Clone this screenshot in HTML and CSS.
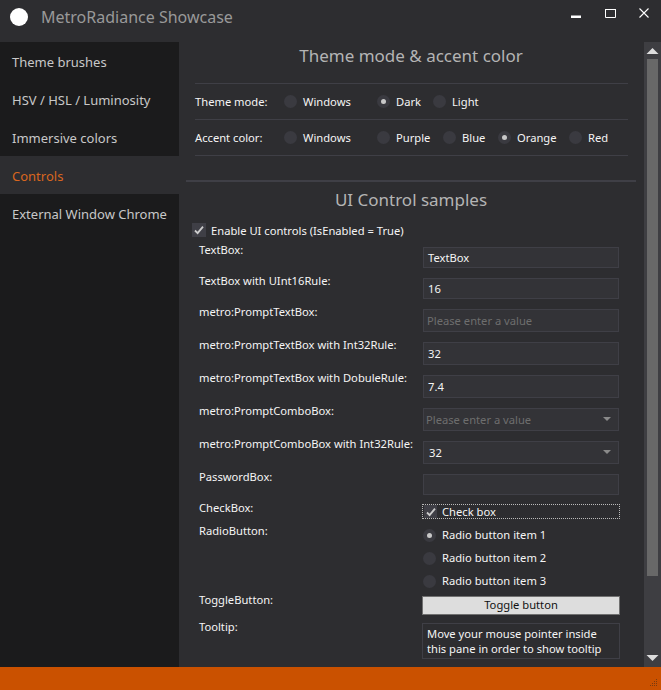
FILE: index.html
```html
<!DOCTYPE html>
<html lang="en">
<head>
<meta charset="utf-8">
<title>MetroRadiance Showcase</title>
<link rel="stylesheet" href="styles.css">
</head>
<body>
<div class="window">
  <header class="titlebar">
    <span class="app-icon"></span>
    <span class="app-title">MetroRadiance Showcase</span>
    <div class="caption">
      <svg class="cap" width="34" height="42" viewBox="0 0 34 42"><rect x="12" y="15.500" width="10" height="2.500" fill="#fff"/></svg>
      <svg class="cap" width="34" height="42" viewBox="0 0 34 42"><path d="M12.500 9.500h10v8h-10z" fill="none" stroke="#fff"/><path d="M12 9.500h11" fill="none" stroke="#fff"/></svg>
      <svg class="cap" width="34" height="42" viewBox="0 0 34 42"><path d="M12.500 8.500l9 9M21.500 8.500l-9 9" fill="none" stroke="#fff" stroke-width="1.100"/></svg>
    </div>
  </header>
  <div class="body">
    <nav class="sidebar">
      <div class="nav-item">Theme brushes</div>
      <div class="nav-item">HSV / HSL / Luminosity</div>
      <div class="nav-item">Immersive colors</div>
      <div class="nav-item active">Controls</div>
      <div class="nav-item">External Window Chrome</div>
    </nav>
    <main class="pane">
      <div class="content">
        <h2 class="heading h-first">Theme mode &amp; accent color</h2>
        <div class="settings">
          <div class="setting-row">
            <span class="setting-label">Theme mode:</span>
            <span class="opt w-win"><i class="radio"></i>Windows</span>
            <span class="opt w-dark"><i class="radio on"></i>Dark</span>
            <span class="opt"><i class="radio"></i>Light</span>
          </div>
          <div class="setting-row">
            <span class="setting-label">Accent color:</span>
            <span class="opt w-win"><i class="radio"></i>Windows</span>
            <span class="opt w-purple"><i class="radio"></i>Purple</span>
            <span class="opt w-blue"><i class="radio"></i>Blue</span>
            <span class="opt w-orange"><i class="radio on"></i>Orange</span>
            <span class="opt"><i class="radio"></i>Red</span>
          </div>
        </div>
        <hr class="divider">
        <h2 class="heading h-second">UI Control samples</h2>
        <div class="enable"><i class="check"><svg width="14" height="14" viewBox="0 0 14 14"><path d="M3 7.500l2.600 2.600L11 3.600" fill="none" stroke="#ccc" stroke-width="1.800"/></svg></i>Enable UI controls (IsEnabled = True)</div>
        <div class="samples">
          <div class="s-label">TextBox:</div>
          <div class="tb">TextBox</div>
          <div class="s-label">TextBox with UInt16Rule:</div>
          <div class="tb">16</div>
          <div class="s-label">metro:PromptTextBox:</div>
          <div class="tb tall prompt">Please enter a value</div>
          <div class="s-label">metro:PromptTextBox with Int32Rule:</div>
          <div class="tb tall">32</div>
          <div class="s-label">metro:PromptTextBox with DobuleRule:</div>
          <div class="tb tall">7.4</div>
          <div class="s-label">metro:PromptComboBox:</div>
          <div class="tb tall prompt combo">Please enter a value<i class="arrow"></i></div>
          <div class="s-label">metro:PromptComboBox with Int32Rule:</div>
          <div class="tb tall combo val">32<i class="arrow"></i></div>
          <div class="s-label">PasswordBox:</div>
          <div class="tb"></div>
          <div class="s-label l-check">CheckBox:</div>
          <div class="checkline"><i class="check"><svg width="14" height="14" viewBox="0 0 14 14"><path d="M3 7.500l2.600 2.600L11 3.600" fill="none" stroke="#ccc" stroke-width="1.800"/></svg></i>Check box</div>
          <div class="s-label l-radio">RadioButton:</div>
          <div class="radios">
            <span class="opt"><i class="radio on"></i>Radio button item 1</span>
            <span class="opt"><i class="radio"></i>Radio button item 2</span>
            <span class="opt"><i class="radio"></i>Radio button item 3</span>
          </div>
          <div class="s-label l-toggle">ToggleButton:</div>
          <div class="toggle">Toggle button</div>
          <div class="s-label l-tip">Tooltip:</div>
          <div class="tip">Move your mouse pointer inside<br>this pane in order to show tooltip</div>
        </div>
      </div>
      <div class="scrollbar">
        <svg class="sb-arrow" width="17" height="17" viewBox="0 0 17 17"><path d="M2.500 12L8.500 6l6 6z" fill="#ddd"/></svg>
        <div class="track"><div class="thumb"></div></div>
        <svg class="sb-arrow" width="17" height="17" viewBox="0 0 17 17"><path d="M2.500 5l6 6 6-6z" fill="#ddd"/></svg>
      </div>
    </main>
  </div>
  <footer class="status">
    <svg class="grip" width="10" height="10" viewBox="0 0 10 10" fill="#7a3a10"><rect x="7" y="1" width="1" height="1"/><rect x="5" y="3" width="1" height="1"/><rect x="7" y="3" width="1" height="1"/><rect x="3" y="5" width="1" height="1"/><rect x="5" y="5" width="1" height="1"/><rect x="7" y="5" width="1" height="1"/><rect x="1" y="7" width="1" height="1"/><rect x="3" y="7" width="1" height="1"/><rect x="5" y="7" width="1" height="1"/><rect x="7" y="7" width="1" height="1"/></svg>
  </footer>
</div>
</body>
</html>
```
FILE: styles.css
```css
* { box-sizing: border-box; }
html, body { margin: 0; height: 100%; }
body { font-family: "Noto Sans", sans-serif; font-size: 11.200px; color: #f5f5f5; background: #2d2d30; overflow: hidden; }
i { display: block; font-style: normal; }
.window { width: 661px; height: 690px; display: flex; flex-direction: column; }

.titlebar { height: 42px; flex: none; display: flex; align-items: center; padding: 0 0 8px 10px; background: #2d2d30; }
.app-icon { width: 18px; height: 18px; border-radius: 50%; background: #fff; margin-right: 13px; }
.app-title { font-size: 16px; color: #999; }
.caption { margin-left: auto; display: flex; align-self: flex-start; }
.cap { display: block; }

.body { flex: 1; display: flex; min-height: 0; }
.sidebar { width: 179px; flex: none; background: #1b1b1c; }
.nav-item { height: 38px; padding-left: 12px; line-height: 41px; font-size: 13px; color: #c8c8c8; }
.nav-item.active { background: #2d2d30; color: #d9661f; }

.pane { flex: 1; display: flex; min-width: 0; }
.content { flex: 1; min-width: 0; overflow: hidden; padding-left: 7px; }
.heading { margin: 0; font-weight: 400; font-size: 17px; color: #b4b4b4; text-align: center; width: 450px; }
.h-first { height: 41px; line-height: 27px; }
.settings { width: 433px; margin-left: 9px; border-top: 1px solid #3f3f46; }
.setting-row { height: 36px; display: flex; align-items: center; border-bottom: 1px solid #3f3f46; }
.setting-label { width: 89px; flex: none; }
.opt { display: flex; align-items: center; gap: 6px; white-space: nowrap; line-height: 16px; }
.w-win { width: 93px; }
.w-dark { width: 56px; }
.w-purple { width: 66px; }
.w-blue { width: 55px; }
.w-orange { width: 71px; }
.radio { width: 13px; height: 13px; border-radius: 50%; background: #3a3a40; flex: none; position: relative; }
.radio.on::after { content: ""; position: absolute; left: 4px; top: 4px; width: 5px; height: 5px; border-radius: 50%; background: #c8c8c8; }
.divider { margin: 24px 0 0; height: 2px; border: 0; background: #3f3f46; width: 450px; }
.h-second { height: 36px; line-height: 36px; }
.enable { display: flex; align-items: center; gap: 5px; height: 16px; margin: 4px 0 0 6px; }
.check { width: 14px; height: 14px; background: #3f3f46; flex: none; }
.check svg { display: block; }

.samples { display: grid; grid-template-columns: 224px 196px; margin: 9px 0 0 13px;
  grid-template-rows: 31px 31px 33px 33px 33px 33px 33px 30px 20px 72px 27px 36px; }
.s-label { margin-top: -5px; line-height: 16px; white-space: nowrap; }
.l-check { margin-top: -4px; }
.l-radio { margin-top: -1px; }
.l-toggle { margin-top: -4px; }
.l-tip { margin-top: -4px; }
.tb { height: 21px; border: 1px solid #3f3f46; background: #333337; padding-left: 4px; line-height: 19px; position: relative; }
.tb.tall { height: 23px; line-height: 21px; }
.prompt { color: #6e6e6e; padding-left: 3px; }
.combo { padding-left: 2px; }
.combo.val { padding-left: 5px; }
.arrow { position: absolute; right: 7px; top: 8px; width: 0; height: 0; border-left: 4px solid transparent; border-right: 4px solid transparent; border-top: 4px solid #8a8a8a; }
.checkline { height: 15px; display: flex; align-items: center; gap: 5px; margin: 0 -1px; padding-left: 2px; outline: 1px dotted #bbb; outline-offset: -1px; }
.checkline .check { width: 13px; height: 13px; }
.radios { display: flex; flex-direction: column; gap: 7px; padding-top: 3px; }
.toggle { height: 19px; margin: 0 -1px; background: #dddddd; border: 1px solid #707070; color: #111; text-align: center; line-height: 16px; }
.tip { height: 36px; margin: 0 -1px; border: 1px solid #3f3f46; padding: 2px 4px; line-height: 15px; white-space: nowrap; }

.scrollbar { width: 17px; flex: none; background: #3e3e42; display: flex; flex-direction: column; }
.sb-arrow { display: block; flex: none; }
.track { flex: 1; padding: 0 3px; }
.thumb { height: 517px; background: #686868; }

.status { height: 23px; flex: none; background: #ca5100; position: relative; }
.grip { position: absolute; right: 2px; bottom: 2px; }
```
